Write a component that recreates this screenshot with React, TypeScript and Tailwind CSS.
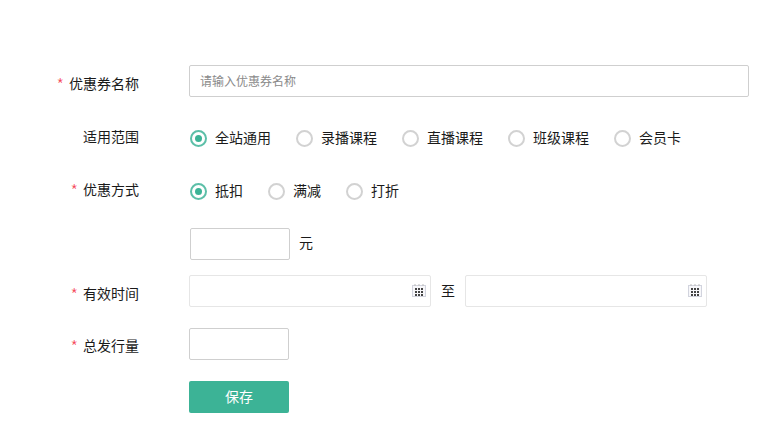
const font = "[font-family:'Noto_Sans_CJK_SC','Liberation_Sans',sans-serif]";

function Label({ text, required, nudge = '' }: { text: string; required?: boolean; nudge?: string }) {
  return (
    <div className={`flex h-full w-[139px] shrink-0 items-center justify-end text-[14px] leading-none text-[#1a1a1a] ${nudge}`}>
      {required && <span className="mr-[5px] text-[17px] font-light text-[#f5475a]">*</span>}
      {text}
    </div>
  );
}

function Radio({ text, checked }: { text: string; checked?: boolean }) {
  return (
    <label className="mr-[25px] flex items-center text-[14px] leading-none text-[#1a1a1a]">
      <span
        className={`mr-[8px] flex size-[17px] items-center justify-center rounded-full border-2 ${
          checked ? 'border-[#5cbfa8]' : 'border-[#d2d2d2]'
        }`}
      >
        {checked && <span className="size-[7px] rounded-full bg-[#3cb396]" />}
      </span>
      <span className="-mt-[2px]">{text}</span>
    </label>
  );
}

function CalendarIcon() {
  return (
    <svg width="14" height="13" viewBox="0 0 14 13" className="absolute right-[4px] top-[8px]">
      <rect x="0.5" y="1.5" width="13" height="11" fill="#f7f7fa" stroke="#d2d4de" />
      <path d="M3 0v2M7 0v2M11 0v2" stroke="#bdbdbd" />
      {[4, 7, 10].map((y) =>
        [3, 6, 9].map((x) => <rect key={`${x}-${y}`} x={x} y={y} width="2" height="2" fill="#444" />),
      )}
    </svg>
  );
}

function DateInput() {
  return (
    <div className="relative h-8 w-[242px] rounded-[2px] border border-[#e6e6e6] bg-white">
      <CalendarIcon />
    </div>
  );
}

export default function App() {
  return (
    <div className={`h-[442px] w-[770px] overflow-hidden bg-white pt-[65px] ${font}`}>
      <div className="flex h-8 items-center">
        <Label text="优惠券名称" required nudge="pt-[4px]" />
        <div className="ml-[50px] flex h-8 w-[560px] items-center rounded-[2px] border border-[#cfcfcf] px-[10px] text-[12px] text-[#8a8a8a]">
          请输入优惠券名称
        </div>
      </div>

      <div className="mt-[25px] flex h-8 items-center">
        <Label text="适用范围" nudge="pb-[4px]" />
        <div className="ml-[51px] flex items-center">
          <Radio text="全站通用" checked />
          <Radio text="录播课程" />
          <Radio text="直播课程" />
          <Radio text="班级课程" />
          <Radio text="会员卡" />
        </div>
      </div>

      <div className="mt-[21px] flex h-8 items-center">
        <Label text="优惠方式" required nudge="pb-[4px]" />
        <div className="ml-[51px] flex items-center">
          <Radio text="抵扣" checked />
          <Radio text="满减" />
          <Radio text="打折" />
        </div>
      </div>

      <div className="mt-[21px] ml-[190px] flex h-8 items-center text-[14px] text-[#1a1a1a]">
        <div className="h-8 w-[100px] rounded-[2px] border border-[#cfcfcf]" />
        <span className="-mt-[3px] ml-[9px]">元</span>
      </div>

      <div className="mt-[15px] flex h-8 items-center">
        <Label text="有效时间" required nudge="pt-[4px]" />
        <div className="ml-[50px] flex items-center text-[14px] text-[#1a1a1a]">
          <DateInput />
          <span className="-mt-[2px] mx-[10px]">至</span>
          <DateInput />
        </div>
      </div>

      <div className="mt-[21px] flex h-8 items-center">
        <Label text="总发行量" required nudge="pt-[2px]" />
        <div className="ml-[50px] h-8 w-[100px] rounded-[2px] border border-[#cfcfcf]" />
      </div>

      <button
        type="button"
        className="mt-[21px] ml-[189px] h-8 w-[100px] rounded-[2px] bg-[#3cb396] pb-[2px] text-[14px] text-white"
      >
        保存
      </button>
    </div>
  );
}
